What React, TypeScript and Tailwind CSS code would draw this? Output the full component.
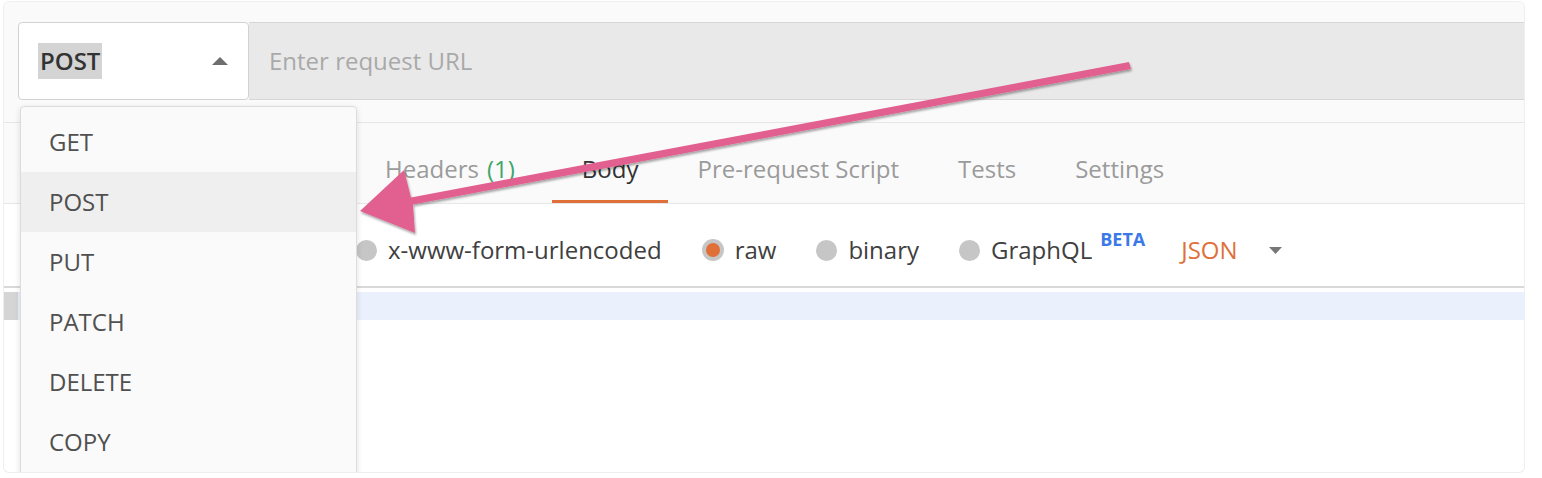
import React from "react";

const methods = ["GET", "POST", "PUT", "PATCH", "DELETE", "COPY"];

function Radio({ label, checked }: { label: string; checked?: boolean }) {
  return (
    <div className="mr-[40px] flex shrink-0 items-center gap-[11px]">
      {checked ? (
        <span className="flex h-[22px] w-[22px] items-center justify-center rounded-full bg-[#c6c6c6]">
          <span className="h-[14px] w-[14px] rounded-full bg-[#e06f38]" />
        </span>
      ) : (
        <span className="h-[21px] w-[21px] rounded-full bg-[#c6c6c6]" />
      )}
      <span className="text-[#404040]">{label}</span>
    </div>
  );
}

function Tab({ children, active }: { children: React.ReactNode; active?: boolean }) {
  return (
    <div
      className={`relative flex h-full shrink-0 items-center px-[29.5px] pt-[12px] ${
        active ? "text-[#333333]" : "text-[#9b9b9b]"
      }`}
    >
      {children}
      {active && <span className="absolute bottom-0 left-0 right-0 h-[3px] bg-[#e0703a]" />}
    </div>
  );
}

export default function App() {
  return (
    <div className="relative h-[478px] w-[1542px] overflow-hidden bg-white font-['Open_Sans',sans-serif] text-[24px]">
      {/* app window */}
      <div className="relative ml-[4px] mt-[2px] h-[470px] w-[1520px] overflow-hidden rounded-[5px] bg-white shadow-[0_0_0_1px_#efefef]">
        {/* request bar */}
        <div className="bg-[#fafafa] pt-[20px]">
          <div className="flex h-[78px]">
            <div className="ml-[14px] flex h-full w-[231px] shrink-0 items-center justify-between rounded-[4px] border border-[#d2d2d2] bg-white pl-[19px] pr-[20px]">
              <span className="bg-[#d4d4d4] px-[2px] font-semibold text-[#333333]">POST</span>
              <svg width="16" height="8" viewBox="0 0 16 8">
                <polygon points="8,0 16,8 0,8" fill="#6e6e6e" />
              </svg>
            </div>
            <div className="flex flex-1 items-center border-y border-[#d6d6d6] bg-[#e9e9e9] pl-[20px] text-[#a9a9a9]">
              Enter request URL
            </div>
          </div>
          <div className="h-[22px]" />
        </div>

        {/* tabs (Params / Authorization sit under the open menu) */}
        <div className="flex h-[82px] border-y border-[#e6e6e6] bg-[#fafafa]">
          <div className="w-[351.5px] shrink-0" />
          <Tab>
            Headers<span className="ml-[8px] mr-[8px] text-[#3fa66b]">(1)</span>
          </Tab>
          <Tab active>Body</Tab>
          <Tab>Pre-request Script</Tab>
          <Tab>Tests</Tab>
          <Tab>Settings</Tab>
        </div>

        {/* body type */}
        <div className="flex h-[84px] items-center border-b-2 border-[#d9d9d9] bg-white pt-[10px]">
          <div className="w-[352px] shrink-0" />
          <Radio label="x-www-form-urlencoded" />
          <Radio label="raw" checked />
          <Radio label="binary" />
          <div className="flex shrink-0 items-center gap-[11px]">
            <span className="h-[21px] w-[21px] rounded-full bg-[#c6c6c6]" />
            <span className="text-[#404040]">GraphQL</span>
          </div>
          <span className="relative -top-[11px] ml-[8px] text-[18px] font-bold text-[#3b78e8]">BETA</span>
          <span className="ml-[36px] text-[#e0703a]">JSON</span>
          <svg className="ml-[31px]" width="13" height="7" viewBox="0 0 13 7">
            <polygon points="0,0 13,0 6.5,7" fill="#777777" />
          </svg>
        </div>

        {/* editor */}
        <div className="h-[4px]" />
        <div className="flex h-[28px]">
          <div className="w-[14px] bg-[#d5d5d5]" />
          <div className="flex-1 bg-[#eaf1fc]" />
        </div>

        {/* method dropdown */}
        <div className="absolute left-[16px] top-[104px] h-[380px] w-[337px] rounded-[4px] border border-[#dcdcdc] bg-[#fafafa] pt-[5px] shadow-[0_2px_6px_rgba(0,0,0,0.12)]">
          {methods.map((m) => (
            <div
              key={m}
              className={`flex h-[60px] items-center pl-[28px] text-[#505050] ${
                m === "POST" ? "bg-[#efefef]" : ""
              }`}
            >
              {m}
            </div>
          ))}
        </div>
      </div>

      {/* annotation arrow */}
      <svg
        className="pointer-events-none absolute left-0 top-0"
        width="1542"
        height="478"
        viewBox="0 0 1542 478"
      >
        <defs>
          <filter id="arrowShadow" x="-5%" y="-30%" width="110%" height="160%">
            <feDropShadow dx="1" dy="2" stdDeviation="1.3" floodColor="#000" floodOpacity="0.35" />
          </filter>
        </defs>
        <polygon
          points="360,211 404,170 411,197.5 1129,62 1131,69 413,204.5 415,233"
          fill="#e2618f"
          filter="url(#arrowShadow)"
        />
      </svg>
    </div>
  );
}
